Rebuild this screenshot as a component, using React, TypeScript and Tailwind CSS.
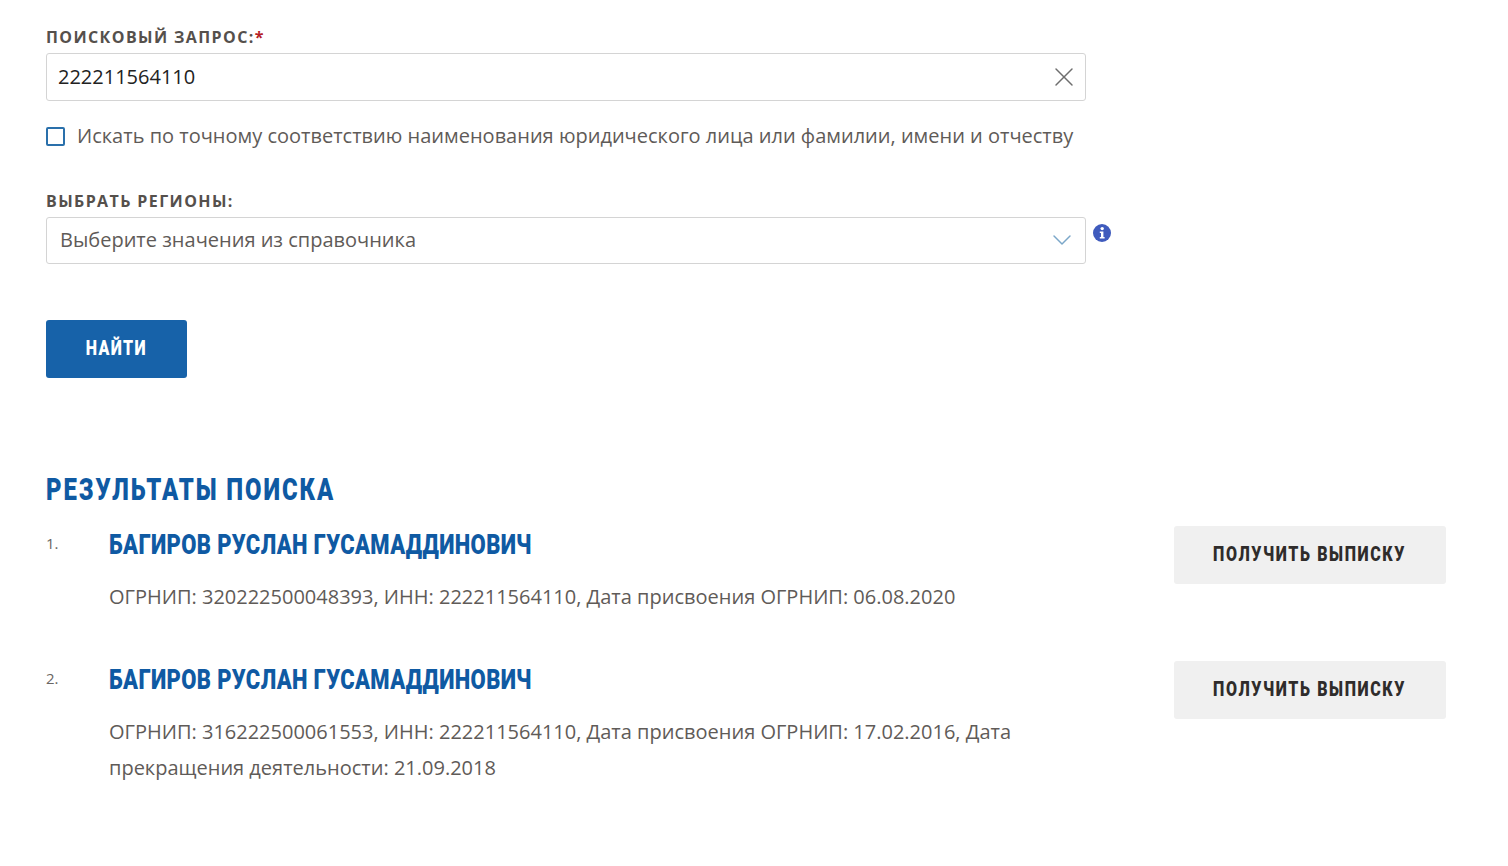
import React from 'react';
import { X, ChevronDown } from 'lucide-react';

// no DIN on this box, so Roboto black gets squeezed horizontally
const din = "font-['Roboto',sans-serif] font-black";

interface ResultItem {
  name: string;
  lines: string[];
}

const results: ResultItem[] = [
  {
    name: 'БАГИРОВ РУСЛАН ГУСАМАДДИНОВИЧ',
    lines: ['ОГРНИП: 320222500048393, ИНН: 222211564110, Дата присвоения ОГРНИП: 06.08.2020'],
  },
  {
    name: 'БАГИРОВ РУСЛАН ГУСАМАДДИНОВИЧ',
    lines: [
      'ОГРНИП: 316222500061553, ИНН: 222211564110, Дата присвоения ОГРНИП: 17.02.2016, Дата',
      'прекращения деятельности: 21.09.2018',
    ],
  },
];

const FieldLabel: React.FC<{ children: React.ReactNode }> = ({ children }) => (
  <div className="text-[16px] leading-[20px] font-bold tracking-[1.4px] text-[#55504c]">{children}</div>
);

const App: React.FC = () => {
  return (
    <div className="w-[1508px] h-[866px] bg-white overflow-hidden pl-[46px] pt-[27px] font-['Open_Sans',sans-serif]">
      <FieldLabel>
        ПОИСКОВЫЙ ЗАПРОС:<span className="text-[#b52025]">*</span>
      </FieldLabel>
      <div className="mt-[6px] w-[1040px] h-[48px] border border-[#d4d4d4] rounded-[3px] flex items-center justify-between pl-[11px] pr-[5px]">
        <span className="text-[20px] text-[#222222]">222211564110</span>
        <X className="w-[32px] h-[32px] text-[#6e6e6e]" strokeWidth={1.1} />
      </div>

      <div className="mt-[25px] flex items-center gap-[12px] h-[20px]">
        <div className="w-[19px] h-[19px] border-2 border-[#2a70ab] rounded-[2px] shrink-0" />
        <span className="text-[20px] whitespace-nowrap text-[#5f5b58]">
          Искать по точному соответствию наименования юридического лица или фамилии, имени и отчеству
        </span>
      </div>

      <div className="mt-[45px]">
        <FieldLabel>ВЫБРАТЬ РЕГИОНЫ:</FieldLabel>
      </div>
      <div className="mt-[6px] flex items-start">
        <div className="w-[1040px] h-[47px] border border-[#d4d4d4] rounded-[3px] flex items-center justify-between pl-[13px] pr-[7px] pb-[2px]">
          <span className="text-[20px] text-[#5f5b58]">Выберите значения из справочника</span>
          <ChevronDown className="w-[32px] h-[32px] text-[#7ba7c9]" strokeWidth={1.1} />
        </div>
        <svg className="ml-[7px] mt-[7px]" width="18" height="18" viewBox="0 0 18 18">
          <circle cx="9" cy="9" r="9" fill="#3f5bbd" />
          <circle cx="9.2" cy="4.6" r="1.7" fill="#ffffff" />
          <path d="M6.8 7.4h3.6v5.6h1.2v1.6H6.8V13H8V9H6.8z" fill="#ffffff" />
        </svg>
      </div>

      <button className={`mt-[56px] block w-[141px] h-[58px] pb-[2px] bg-[#1762a9] rounded-[3px] text-white text-[20px] tracking-[1.7px] ${din}`}>
        <span className="inline-block scale-x-[0.8]">НАЙТИ</span>
      </button>

      <h2 className={`mt-[92px] text-[31px] leading-[40px] tracking-[2.5px] text-[#0f5aa3] ${din}`}>
        <span className="inline-block origin-left scale-x-[0.77]">РЕЗУЛЬТАТЫ ПОИСКА</span>
      </h2>

      <ol className="mt-[16px] w-[1400px]">
        {results.map((item, index) => (
          <li key={index} className="flex items-start h-[135px] last:h-auto">
            <span className="w-[63px] shrink-0 pt-[7px] text-[15px] leading-[20px] text-[#6a6663]">{index + 1}.</span>
            <div className="w-[1065px] shrink-0">
              <div className={`text-[28px] leading-[38px] tracking-[0.45px] text-[#0f5aa3] ${din}`}>
                <span className="inline-block origin-left scale-x-[0.785]">{item.name}</span>
              </div>
              <div className="mt-[15px] text-[20px] leading-[36px] text-[#5f5b58]">
                {item.lines.map((line) => (
                  <div key={line} className="whitespace-nowrap">{line}</div>
                ))}
              </div>
            </div>
            <button className={`w-[272px] h-[58px] pb-[2px] shrink-0 bg-[#f0f0f0] rounded-[3px] text-[20px] tracking-[2px] text-[#2f2c2b] ${din}`}>
              <span className="inline-block scale-x-[0.8]">ПОЛУЧИТЬ ВЫПИСКУ</span>
            </button>
          </li>
        ))}
      </ol>
    </div>
  );
};

export default App;
